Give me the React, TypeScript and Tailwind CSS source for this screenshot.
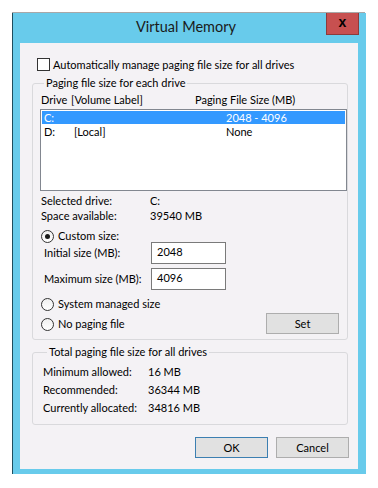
import React from "react";

function Radio({ checked, label }: { checked?: boolean; label: string }) {
    return (
        <div className="flex h-[14px] items-center">
            <span className="flex h-[13px] w-[13px] items-center justify-center rounded-full border border-[#333333] bg-gradient-to-b from-[#f0f0f0] to-white">
                {checked && <span className="h-[5px] w-[5px] rounded-full bg-[#1a1a1a]" />}
            </span>
            <span className="ml-[4px] leading-[14px]">{label}</span>
        </div>
    );
}

function SizeField({ label, value }: { label: string; value: string }) {
    return (
        <div className="ml-[4px] flex h-[22px] items-center">
            <span className="w-[107px] whitespace-nowrap">{label}</span>
            <div className="flex h-[22px] w-[75px] items-center border border-[#7a7a7a] bg-white pb-[2px] pl-[5px]">{value}</div>
        </div>
    );
}

function WinButton({ label, isDefault }: { label: string; isDefault?: boolean }) {
    return (
        <button
            className={
                isDefault
                    ? "flex h-[21px] w-[73px] items-center justify-center border border-[#3c7fb1] bg-[#e1e1e1]"
                    : "flex h-[21px] w-[73px] items-center justify-center border border-[#adadad] bg-[#e1e1e1]"
            }
        >
            {label}
        </button>
    );
}

export default function App() {
    return (
        <div className="h-[488px] w-[378px] overflow-hidden bg-white font-['Segoe_UI','Lato',sans-serif] text-[11px] leading-[16px] text-black">
            {/* ** Edge of the window behind ** */}
            <div className="ml-[12px] h-[13px] w-[353px] border-b border-[#a8a8a8]" />

            {/* ** Dialog frame ** */}
            <div className="ml-[12px] w-[354px] border-l border-[#1e4d5e] bg-[#68cbeb] pb-[5px]">
                {/* ** Title Bar ** */}
                <div className="grid h-[30px] grid-cols-[1fr_auto_1fr] pr-[7px]">
                    <div />
                    <div className="flex items-center pb-[2px] text-[14.5px] text-[#1a1a1a]">Virtual Memory</div>
                    <div className="flex justify-end">
                        <div className="flex h-[22px] w-[33px] items-center justify-center border border-t-0 border-[#8c3b3b] bg-[#c75050] pb-[3px] font-['Liberation_Sans',sans-serif] text-[14px] font-bold text-black">
                            x
                        </div>
                    </div>
                </div>

                {/* ** Client Area ** */}
                <div className="ml-[7px] h-[426px] w-[338px] bg-[#f4f2f5] pt-[15px]">
                    <div className="ml-[17px] flex h-[13px] items-center">
                        <span className="h-[13px] w-[13px] border border-[#333333] bg-white" />
                        <span className="ml-[3px]">Automatically manage paging file size for all drives</span>
                    </div>

                    {/* ** Paging file size for each drive ** */}
                    <fieldset className="ml-[12px] mt-[4px] w-[316px] rounded-[3px] border border-[#d9d9dc] pb-[5px] pl-[7px]">
                        <legend className="ml-[4px] px-[2px] leading-[16px]">Paging file size for each drive</legend>
                        <div className="ml-[1px] mt-[1px] flex h-[16px] items-center whitespace-nowrap">
                            <span className="w-[30px]">Drive</span>
                            <span className="w-[124px]">[Volume Label]</span>
                            <span>Paging File Size (MB)</span>
                        </div>
                        <div className="mt-[1px] h-[82px] w-[307px] border border-[#828790] bg-white p-[1px] leading-[13px]">
                            <div className="flex h-[13px] items-center bg-[#3399ff] pl-[2px] text-white">
                                <span className="w-[182px]">C:</span>
                                <span>2048 - 4096</span>
                            </div>
                            <div className="flex h-[13px] items-center pl-[2px] pt-[1px]">
                                <span className="w-[30px]">D:</span>
                                <span className="w-[152px]">[Local]</span>
                                <span>None</span>
                            </div>
                        </div>

                        <div className="ml-[1px] mt-[2px] grid grid-cols-[109px_1fr] leading-[15px]">
                            <span>Selected drive:</span>
                            <span>C:</span>
                            <span>Space available:</span>
                            <span>39540 MB</span>
                        </div>

                        <div className="ml-[1px] mt-[6px]">
                            <Radio checked label="Custom size:" />
                        </div>
                        <div className="mt-[-1px]">
                            <SizeField label="Initial size (MB):" value="2048" />
                        </div>
                        <div className="mt-[4px]">
                            <SizeField label="Maximum size (MB):" value="4096" />
                        </div>
                        <div className="ml-[1px] mt-[7px]">
                            <Radio label="System managed size" />
                        </div>
                        <div className="ml-[1px] mt-[2px] flex w-[298px] items-center justify-between">
                            <div className="mt-[1px]">
                                <Radio label="No paging file" />
                            </div>
                            <WinButton label="Set" />
                        </div>
                    </fieldset>

                    {/* ** Total paging file size for all drives ** */}
                    <fieldset className="ml-[12px] mt-[4px] w-[316px] rounded-[3px] border border-[#d9d9dc] pb-[7px] pl-[10px]">
                        <legend className="ml-[4px] px-[2px] leading-[16px]">Total paging file size for all drives</legend>
                        <div className="mt-[3px] grid grid-cols-[105px_1fr] whitespace-nowrap leading-[18px]">
                            <span>Minimum allowed:</span>
                            <span>16 MB</span>
                            <span>Recommended:</span>
                            <span>36344 MB</span>
                            <span>Currently allocated:</span>
                            <span>34816 MB</span>
                        </div>
                    </fieldset>

                    {/* ** Dialog Buttons ** */}
                    <div className="mt-[12px] flex justify-end gap-[8px] pr-[9px]">
                        <WinButton label="OK" isDefault />
                        <WinButton label="Cancel" />
                    </div>
                </div>
            </div>
        </div>
    );
}
